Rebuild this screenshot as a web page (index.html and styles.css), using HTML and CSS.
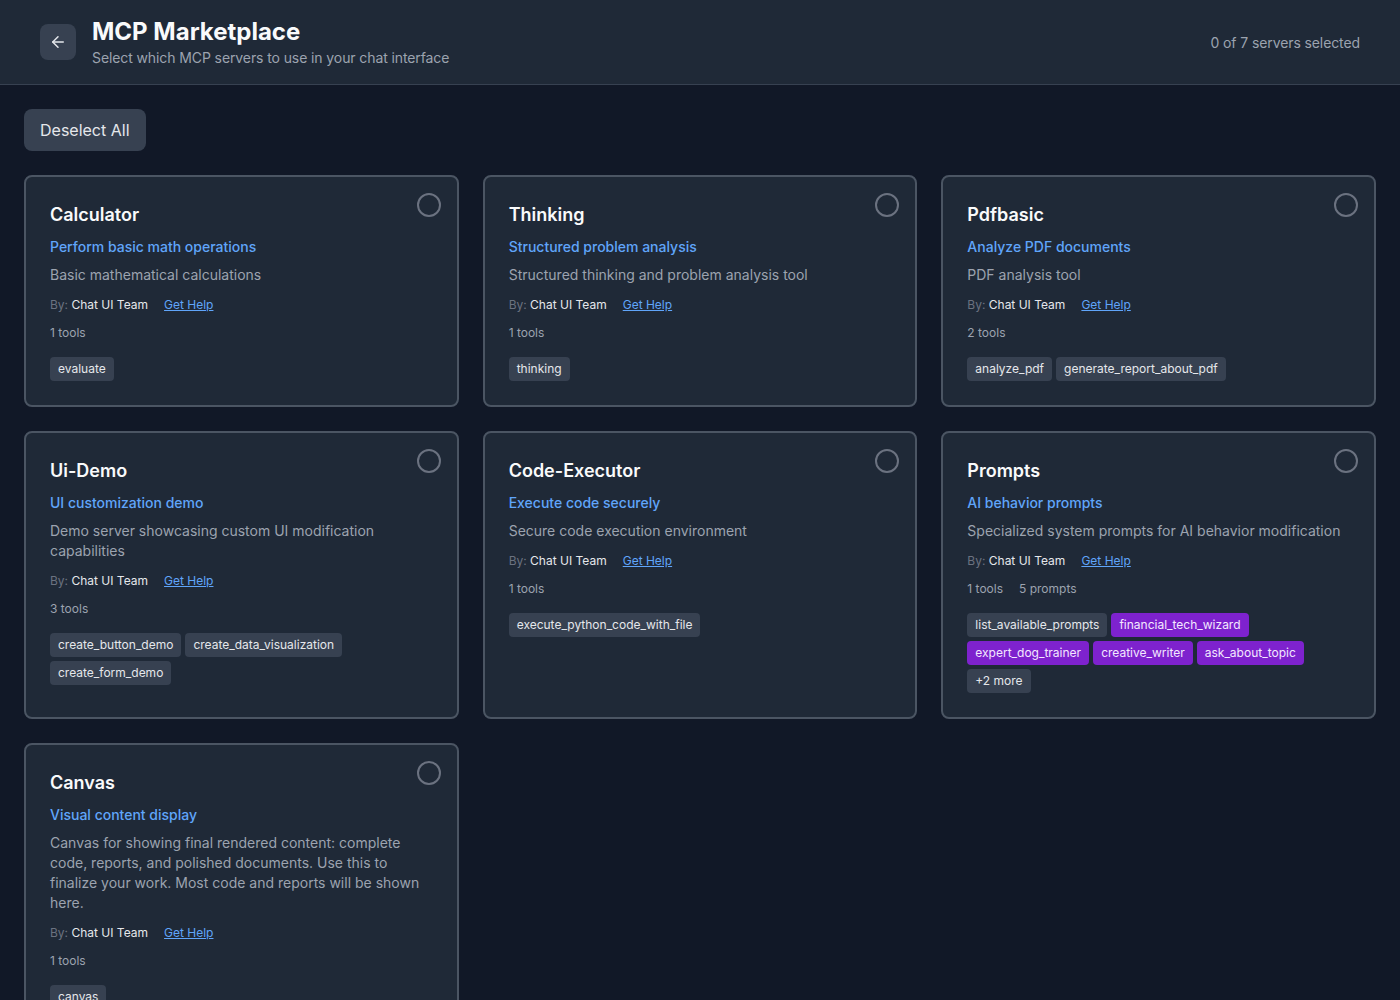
FILE: index.html
```html
<!DOCTYPE html>
<html>
<head>
<meta charset="utf-8">
<link rel="stylesheet" href="styles.css">
</head>
<body>
<header class="topbar">
  <div class="topbar-left">
    <button class="back-btn" aria-label="Back">
      <svg width="18" height="18" viewBox="0 0 24 24" fill="none" stroke="currentColor" stroke-width="2" stroke-linecap="round" stroke-linejoin="round"><path d="M19 12H5"/><path d="M12 19l-7-7 7-7"/></svg>
    </button>
    <div class="titles">
      <h1>MCP Marketplace</h1>
      <p>Select which MCP servers to use in your chat interface</p>
    </div>
  </div>
  <div class="count">0 of 7 servers selected</div>
</header>
<main class="main">
  <button class="deselect">Deselect All</button>
  <div class="grid">
    <div class="card">
      <span class="radio"></span>
      <h2>Calculator</h2>
      <div class="short">Perform basic math operations</div>
      <div class="desc">Basic mathematical calculations</div>
      <div class="meta"><span class="by">By:</span> <span class="author">Chat UI Team</span><a class="help" href="#">Get Help</a></div>
      <div class="counts"><span>1 tools</span></div>
      <div class="tags"><span class="tag">evaluate</span></div>
    </div>
    <div class="card">
      <span class="radio"></span>
      <h2>Thinking</h2>
      <div class="short">Structured problem analysis</div>
      <div class="desc">Structured thinking and problem analysis tool</div>
      <div class="meta"><span class="by">By:</span> <span class="author">Chat UI Team</span><a class="help" href="#">Get Help</a></div>
      <div class="counts"><span>1 tools</span></div>
      <div class="tags"><span class="tag">thinking</span></div>
    </div>
    <div class="card">
      <span class="radio"></span>
      <h2>Pdfbasic</h2>
      <div class="short">Analyze PDF documents</div>
      <div class="desc">PDF analysis tool</div>
      <div class="meta"><span class="by">By:</span> <span class="author">Chat UI Team</span><a class="help" href="#">Get Help</a></div>
      <div class="counts"><span>2 tools</span></div>
      <div class="tags"><span class="tag">analyze_pdf</span><span class="tag">generate_report_about_pdf</span></div>
    </div>
    <div class="card">
      <span class="radio"></span>
      <h2>Ui-Demo</h2>
      <div class="short">UI customization demo</div>
      <div class="desc">Demo server showcasing custom UI modification capabilities</div>
      <div class="meta"><span class="by">By:</span> <span class="author">Chat UI Team</span><a class="help" href="#">Get Help</a></div>
      <div class="counts"><span>3 tools</span></div>
      <div class="tags"><span class="tag">create_button_demo</span><span class="tag">create_data_visualization</span><span class="tag">create_form_demo</span></div>
    </div>
    <div class="card">
      <span class="radio"></span>
      <h2>Code-Executor</h2>
      <div class="short">Execute code securely</div>
      <div class="desc">Secure code execution environment</div>
      <div class="meta"><span class="by">By:</span> <span class="author">Chat UI Team</span><a class="help" href="#">Get Help</a></div>
      <div class="counts"><span>1 tools</span></div>
      <div class="tags"><span class="tag">execute_python_code_with_file</span></div>
    </div>
    <div class="card">
      <span class="radio"></span>
      <h2>Prompts</h2>
      <div class="short">AI behavior prompts</div>
      <div class="desc">Specialized system prompts for AI behavior modification</div>
      <div class="meta"><span class="by">By:</span> <span class="author">Chat UI Team</span><a class="help" href="#">Get Help</a></div>
      <div class="counts"><span>1 tools</span><span>5 prompts</span></div>
      <div class="tags"><span class="tag">list_available_prompts</span><span class="tag purple">financial_tech_wizard</span><span class="tag purple">expert_dog_trainer</span><span class="tag purple">creative_writer</span><span class="tag purple">ask_about_topic</span><span class="tag">+2 more</span></div>
    </div>
    <div class="card">
      <span class="radio"></span>
      <h2>Canvas</h2>
      <div class="short">Visual content display</div>
      <div class="desc">Canvas for showing final rendered content: complete code, reports, and polished documents. Use this to finalize your work. Most code and reports will be shown here.</div>
      <div class="meta"><span class="by">By:</span> <span class="author">Chat UI Team</span><a class="help" href="#">Get Help</a></div>
      <div class="counts"><span>1 tools</span></div>
      <div class="tags"><span class="tag">canvas</span></div>
    </div>
  </div>
</main>
</body>
</html>
```
FILE: styles.css
```css
* { box-sizing: border-box; }
html, body { margin: 0; padding: 0; }
body {
  background: #111827;
  color: #f3f4f6;
  font-family: Inter, "Noto Sans", sans-serif;
  min-height: 1000px;
}
.topbar {
  display: flex;
  align-items: center;
  justify-content: space-between;
  padding: 16px 40px;
  background: #1f2937;
  border-bottom: 1px solid #374151;
}
.topbar-left { display: flex; align-items: center; gap: 16px; }
.back-btn {
  width: 36px; height: 36px;
  border: none; border-radius: 8px;
  background: #374151; color: #e5e7eb;
  display: flex; align-items: center; justify-content: center;
  padding: 0;
}
.titles h1 {
  margin: 0; font-size: 24px; line-height: 32px; font-weight: 700; color: #f9fafb;
}
.titles p {
  margin: 0; font-size: 14px; line-height: 20px; color: #9ca3af; letter-spacing: -0.1px;
}
.count { font-size: 14px; color: #9ca3af; letter-spacing: -0.1px; }
.main { padding: 24px; }
.deselect {
  font-family: inherit;
  font-size: 16px; line-height: 24px;
  padding: 9px 16px 9px;
  background: #374151; color: #e5e7eb;
  border: none; border-radius: 8px;
  margin-bottom: 24px;
}
.grid {
  display: grid;
  grid-template-columns: repeat(3, 1fr);
  gap: 24px;
}
.card {
  position: relative;
  background: #1f2937;
  border: 2px solid #4b5563;
  border-radius: 8px;
  padding: 24px;
}
.radio {
  position: absolute; top: 16px; right: 16px;
  width: 24px; height: 24px;
  border: 2px solid #6b7280; border-radius: 50%;
}
.card h2 {
  margin: 0; font-size: 18px; line-height: 28px; font-weight: 600; color: #f9fafb;
}
.short {
  margin-top: 8px; font-size: 14px; line-height: 20px; font-weight: 500; color: #60a5fa;
}
.desc {
  margin-top: 8px; font-size: 14px; line-height: 20px; color: #9ca3af;
}
.meta {
  margin-top: 12px; font-size: 12px; line-height: 16px; color: #6b7280;
}
.author { color: #e5e7eb; }
.help { color: #60a5fa; text-decoration: underline; margin-left: 16px; }
.counts {
  margin-top: 12px; font-size: 12px; line-height: 16px; color: #9ca3af;
  display: flex; gap: 16px;
}
.tags { margin-top: 16px; display: flex; flex-wrap: wrap; gap: 4px; }
.tag {
  font-size: 12px; line-height: 16px; padding: 4px 8px;
  background: #374151; color: #e5e7eb; border-radius: 4px;
}
.tag.purple { background: #7e22ce; color: #f3e8ff; }
```
